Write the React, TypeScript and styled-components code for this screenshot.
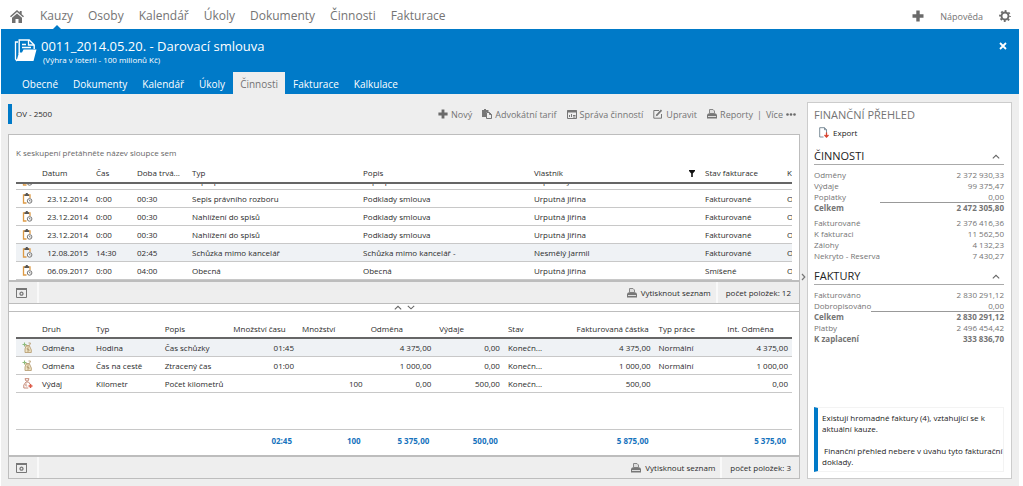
import React, { useLayoutEffect, useRef } from "react";
import styled, { createGlobalStyle, css } from "styled-components";

const blue = "#007ac8";
const grey = "#747474";
const line = "#bdbdbd";

const GlobalStyle = createGlobalStyle`
  * { box-sizing: border-box; }
  body {
    margin: 0;
    background: #fff;
    color: #2b2b2b;
    font-family: "Open Sans", "Noto Sans", sans-serif;
    font-size: 8px;
    line-height: 11px;
  }
  button { font: inherit; color: inherit; background: none; border: 0; padding: 0; cursor: pointer; }
  a { color: inherit; text-decoration: none; }
  svg { display: block; flex: none; }
  h1, h2, h3, p, dl, dd, dt { margin: 0; font-weight: 400; }
`;

const Page = styled.div`
  min-height: 100vh;
  display: flex;
  flex-direction: column;
  padding: 0 4px 0 1px;
`;

const TopBar = styled.header`
  display: flex;
  align-items: center;
  height: 29px;
  padding: 3px 8px 0 9px;
  color: ${grey};
`;

const MainNav = styled.nav`
  display: flex;
  gap: 15px;
  margin-left: 16px;
  font-size: 12px;
  line-height: 26px;
`;

const NavLink = styled.a<{ $active?: boolean }>`
  position: relative;
  ${(p) =>
    p.$active &&
    css`
      &::after {
        content: "";
        position: absolute;
        left: 50%;
        bottom: 0;
        margin-left: -4px;
        border: 4px solid transparent;
        border-top: 0;
        border-bottom-color: ${blue};
      }
    `}
`;

const TopActions = styled.div`
  display: flex;
  align-items: center;
  gap: 16px;
  margin-left: auto;
  font-size: 9px;
`;

const CaseHeader = styled.section`
  display: flex;
  flex-direction: column;
  justify-content: space-between;
  height: 65px;
  background: ${blue};
  color: #fff;
`;

const CaseTop = styled.div`
  display: flex;
  align-items: flex-start;
  gap: 4px;
  padding: 10px 12px 0 13px;
`;

const CaseTitle = styled.h1`
  font-size: 13px;
  line-height: 15px;
`;

const CaseNote = styled.p`
  padding-left: 2px;
  font-size: 8px;
  line-height: 11px;
`;

const CloseButton = styled.button`
  margin-left: auto;
  padding-top: 3px;
`;

const Tabs = styled.nav`
  display: flex;
  gap: 1px;
  padding-left: 14px;
`;

const Tab = styled.a<{ $active?: boolean }>`
  padding: 2px 7px 0;
  font-size: 10px;
  line-height: 20px;
  ${(p) => p.$active && css`background: #eee; color: ${grey};`}
`;

const Body = styled.div`
  flex: 1;
  display: flex;
  background: #eee;
  padding: 0 7px 7px;
`;

const Work = styled.main`
  flex: 1;
  min-width: 0;
  display: flex;
  flex-direction: column;
`;

const Toolbar = styled.div`
  display: flex;
  align-items: center;
  height: 40px;
  padding-right: 4px;
`;

const CaseTag = styled.div`
  border-left: 4px solid ${blue};
  padding-left: 4px;
  line-height: 20px;
`;

const ToolActions = styled.div`
  display: flex;
  align-items: center;
  gap: 10px;
  margin-left: auto;
  color: ${grey};
  font-size: 9px;
`;

const ToolButton = styled.button`
  display: flex;
  align-items: center;
  gap: 3px;
`;

const MoreGroup = styled.div`
  display: flex;
  gap: 4px;
`;

const Panel = styled.section<{ $grow?: boolean }>`
  display: flex;
  flex-direction: column;
  background: #fff;
  border: 1px solid ${line};
  ${(p) => p.$grow && css`flex: 1;`}
`;

const GroupHint = styled.p`
  padding: 12px 7px 0;
  line-height: 11px;
  color: #666;
`;

const GridArea = styled.div`
  flex: 1;
  display: flex;
  min-height: 135px;
  padding: 8px 7px 5px;
`;

const DataTable = styled.table`
  width: 100%;
  height: 100%;
  table-layout: fixed;
  border-collapse: separate;
  border-spacing: 0;
`;

const Col = styled.col<{ $w?: number }>`
  ${(p) => p.$w && css`width: ${p.$w}px;`}
`;

const Th = styled.th`
  height: 19px;
  padding: 0 0 1px 4px;
  border-bottom: 2px solid #666;
  font-weight: 400;
  text-align: left;
  white-space: nowrap;
  overflow: hidden;
`;

const HeadLabel = styled.span`
  display: flex;
  align-items: center;
  justify-content: space-between;
  padding-right: 6px;
`;

const Row = styled.tr<{ $selected?: boolean }>`
  height: 18px;
  ${(p) => p.$selected && css`background: #eff2f5;`}
`;

const Td = styled.td<{ $right?: boolean }>`
  padding: 0 4px;
  border-bottom: 1px solid #c8c8c8;
  white-space: nowrap;
  overflow: hidden;
  text-align: ${(p) => (p.$right ? "right" : "left")};
`;

const EdgeTd = styled(Td)`
  padding-right: 0;
`;

const IconTd = styled(Td)`
  padding: 0 0 0 6px;
`;

const ListTable = styled.table`
  display: block;
  margin: 7px 7px 0;

  thead { display: block; }
  tr {
    display: grid;
    grid-template-columns: 22px 54px 41px 55px 1fr 1fr 1fr 82px 9px;
  }
  th { line-height: 16px; }
  td { line-height: 17px; }
  ${IconTd} { padding-top: 3px; }
`;

const ScrollBody = styled.tbody`
  display: block;
  height: 96px;
  overflow: hidden;
`;

const Filler = styled.td`
  border-bottom: 1px solid #c8c8c8;
`;

const SumTd = styled.td`
  height: 20px;
  padding: 0 6px 0 0;
  color: #1673bd;
  font-weight: 700;
  text-align: right;
`;

const PanelFooter = styled.footer`
  display: flex;
  align-items: stretch;
  height: 23px;
  background: #eee;
  border-top: 2px solid ${line};
`;

const FootCell = styled.div`
  display: flex;
  align-items: center;
  padding: 0 8px;
  border-left: 2px solid #f9f9f9;
`;

const ToolCell = styled.div`
  display: flex;
  align-items: center;
  margin-right: auto;
  padding: 0 10px 0 7px;
  border-right: 2px solid #f9f9f9;
`;

const PrintButton = styled.button`
  display: flex;
  align-items: center;
  gap: 4px;
  padding-right: 5px;
`;

const Splitter = styled.div`
  display: flex;
  align-items: center;
  justify-content: center;
  gap: 5px;
  height: 7px;
  background: #fff;
  border: 1px solid ${line};
  border-width: 0 1px;
`;

const Gutter = styled.div`
  display: flex;
  align-items: center;
  justify-content: center;
  width: 7px;
  padding-bottom: 19px;
  color: #777;
`;

const Side = styled.aside`
  display: flex;
  flex-direction: column;
  width: 205px;
  margin-top: 8px;
  padding: 5px 7px 6px 6px;
  background: #fff;
  border: 1px solid #ccc;
  color: ${grey};
`;

const SideTitle = styled.h2`
  font-size: 11px;
  line-height: 14px;
`;

const ExportButton = styled.button`
  display: flex;
  align-items: center;
  gap: 4px;
  align-self: flex-start;
  margin: 5px 0 3px 5px;
  color: #222;
`;

const SectionHead = styled.h3`
  display: flex;
  align-items: center;
  justify-content: space-between;
  margin-top: 7px;
  padding-right: 4px;
  border-bottom: 1px solid #aaa;
  color: #222;
  font-size: 11px;
  line-height: 16px;
`;

const Figures = styled.dl`
  display: grid;
  grid-template-columns: auto 1fr;
  margin-top: 4px;
`;

const Name = styled.dt<{ $strong?: boolean }>`
  font-weight: ${(p) => (p.$strong ? 700 : 400)};
`;

const Amount = styled.dd<{ $strong?: boolean; $rule?: boolean }>`
  text-align: right;
  font-weight: ${(p) => (p.$strong ? 700 : 400)};
  ${(p) => p.$rule && css`box-shadow: 0 1px 0 #999;`}
`;

const Break = styled.div`
  grid-column: 1 / -1;
  height: 4px;
`;

const Notice = styled.div`
  margin-top: auto;
  padding: 4px 0 4px 4px;
  border: 1px solid #f3f3f3;
  border-left: 4px solid ${blue};
  color: #222;
`;

const NoticeText = styled.p`
  margin-right: -4px;
  & + & { margin-top: 11px; }
`;

const HomeIcon = () => (
  <svg width="14" height="13" viewBox="0 0 14 13" fill="#707070">
    <path d="M7 0 0 6.200l1 1.100L7 2l6 5.300 1-1.100-2.300-2V1H9.700v1.400z" />
    <path d="M2 7.800 7 3.400l5 4.400V13H8.500V9h-3v4H2z" />
  </svg>
);

const PlusIcon = ({ size }: { size: number }) => (
  <svg width={size} height={size} viewBox="0 0 12 12" fill="#6a6a6a">
    <path d="M4.300 0.500h3.400v3.800h3.800v3.400H7.700v3.800H4.300V7.700H.5V4.300h3.800z" />
  </svg>
);

const GearIcon = () => (
  <svg width="12" height="12" viewBox="0 0 12 12" fill="none" stroke="#6a6a6a">
    <circle cx="6" cy="6" r="3.500" strokeWidth="1.900" />
    <circle cx="6" cy="6" r="5" strokeWidth="1.800" strokeDasharray="1.900 2.027" strokeDashoffset="0.900" />
  </svg>
);

const FolderIcon = () => (
  <svg width="23" height="23" viewBox="0 0 23 23" fill="none" stroke="#fff">
    <path d="M4 3H1.500v17l1.500 2" strokeWidth="1.300" />
    <path d="M5.200 15V1h10l5 5v4" strokeWidth="1.400" />
    <path d="M14.500 1v5H20M8 5.500h4M8 8.500h9" strokeWidth="1.300" />
    <path d="M9.500 10.500h13L19.500 22H2.500L5 13.500h3z" fill="#fff" stroke="none" />
  </svg>
);

const CloseIcon = () => (
  <svg width="8" height="8" viewBox="0 0 8 8" stroke="#fff" strokeWidth="1.800">
    <path d="m1 1 6 6M7 1 1 7" />
  </svg>
);

const PasteIcon = () => (
  <svg width="10" height="10" viewBox="0 0 10 10" fill="none" stroke="#777">
    <path d="M0 1h2V0h2v1h2.500v2H4v5H0z" fill="#777" stroke="none" />
    <path d="M4.500 3.500h3l2 2v4h-5zM7.500 3.500v2h2" fill="#eee" />
  </svg>
);

const ChartIcon = () => (
  <svg width="10" height="9" viewBox="0 0 10 9" fill="none" stroke="#777">
    <path d="M.5 .5h9v8h-9z" />
    <path d="M0 1.500h10" strokeWidth="2" />
    <path d="M2.500 7V5M4.500 7V4M6 5.500h2.500M6 7h2.500" />
  </svg>
);

const EditIcon = () => (
  <svg width="10" height="10" viewBox="0 0 10 10" fill="none" stroke="#777">
    <path d="M6 1.500H.8v7.700h7.700V5" />
    <path d="M3.500 6.500 8.500 1.200" strokeWidth="1.800" />
    <path d="m2.500 7.500 1-2 1 1z" fill="#777" stroke="none" />
  </svg>
);

const PrinterIcon = () => (
  <svg width="10" height="10" viewBox="0 0 10 10">
    <path d="M2.500 4.500v-4H6L7.500 2v2.500z" fill="#ddd" stroke="#888" />
    <path d="M1 4.500h8l1 1.500v3.500H0V6z" fill="#777" />
    <path d="M1 7.500h8" stroke="#ddd" />
  </svg>
);

const DotsIcon = () => (
  <svg width="10" height="3" viewBox="0 0 10 3" fill="#6a6a6a">
    <circle cx="1.500" cy="1.500" r="1.300" />
    <circle cx="5" cy="1.500" r="1.300" />
    <circle cx="8.500" cy="1.500" r="1.300" />
  </svg>
);

const ClipboardIcon = () => (
  <svg width="11" height="11" viewBox="0 0 11 11" fill="none">
    <path d="M4.500 10H1.500V2H8v3" stroke="#dd9a45" strokeWidth="1.300" />
    <path d="M2.500 3V1.200h1.300V0h2v1.200H7V3z" fill="#555" />
    <circle cx="7.600" cy="7.900" r="2.300" fill="#fff" stroke="#666" strokeWidth="0.900" />
    <path d="M7.500 6.700V8h1.200" stroke="#666" strokeWidth="0.700" />
  </svg>
);

const MoneyBagIcon = () => (
  <svg width="11" height="11" viewBox="0 0 11 11" fill="none">
    <path d="M4 4h3.500l1.800 4v2.500H3V7z" fill="#efe3c4" stroke="#b9a077" strokeWidth="0.900" />
    <path d="M3.500 3.500h4L8.500 1H6.500" stroke="#b9a077" strokeWidth="0.900" />
    <path d="M.5 2.500h4M2.500 .5v4" stroke="#8dbb7c" strokeWidth="1.100" />
    <path d="M7 6H5.200v1.500H7V9H5" stroke="#a58a5e" strokeWidth="0.700" />
  </svg>
);

const ExpenseIcon = () => (
  <svg width="11" height="11" viewBox="0 0 11 11" fill="none">
    <path d="M3 .7h4L6 3H4zM4 4h2.500l1.500 2M4 4 1.800 7v3h4.500" stroke="#c58a78" strokeWidth="1" />
    <path d="M4.800 6H3.800v2h1.500" stroke="#c58a78" strokeWidth="0.800" />
    <path d="M6.500 8h4M8.500 6v4" stroke="#dc5a48" strokeWidth="1.500" />
  </svg>
);

const WindowGearIcon = () => (
  <svg width="11" height="10" viewBox="0 0 11 10" fill="none" stroke="#777">
    <path d="M.5 .5h10v9H.5z" />
    <path d="M0 1h11" strokeWidth="2" />
    <circle cx="5.500" cy="5.700" r="1.500" strokeWidth="1.300" />
  </svg>
);

const FilterIcon = () => (
  <svg width="6" height="7" viewBox="0 0 6 7" fill="#111">
    <path d="M0 0h6v1L3.800 3.500V7H2.200V3.500L0 1z" />
  </svg>
);

const ExportIcon = () => (
  <svg width="10" height="11" viewBox="0 0 10 11" fill="none">
    <path d="M4.500 10H.7V.7h4.800l2 2V6M5.500 .7v2h2" stroke="#6f8290" strokeWidth="0.900" />
    <path d="M7.500 5.500V10M5.500 8l2 2 2-2" stroke="#d9432f" strokeWidth="1.300" />
  </svg>
);

const chevrons = {
  up: "m.8 4.300 3.200-3 3.200 3",
  down: "m.8 .8 3.200 3 3.200-3",
};

const Chevron = ({ dir }: { dir: "up" | "down" }) => (
  <svg width="8" height="5" viewBox="0 0 8 5" fill="none" stroke="#666" strokeWidth="1.100">
    <path d={chevrons[dir]} />
  </svg>
);

const ChevronRight = () => (
  <svg width="5" height="8" viewBox="0 0 5 8" fill="none" stroke="#777" strokeWidth="1.200">
    <path d="m1 1 2.800 3L1 7" />
  </svg>
);

const navItems = ["Kauzy", "Osoby", "Kalendář", "Úkoly", "Dokumenty", "Činnosti", "Fakturace"];
const tabItems = ["Obecné", "Dokumenty", "Kalendář", "Úkoly", "Činnosti", "Fakturace", "Kalkulace"];

const activities = [
  ["16.12.2014", "0:00", "01:30", "Sepis právního rozboru", "Sepis právního rozboru", "Urputná Jiřina", "Fakturované"],
  ["23.12.2014", "0:00", "00:30", "Sepis právního rozboru", "Podklady smlouva", "Urputná Jiřina", "Fakturované"],
  ["23.12.2014", "0:00", "00:30", "Nahlížení do spisů", "Podklady smlouva", "Urputná Jiřina", "Fakturované"],
  ["23.12.2014", "0:00", "00:30", "Nahlížení do spisů", "Podklady smlouva", "Urputná Jiřina", "Fakturované"],
  ["12.08.2015", "14:30", "02:45", "Schůzka mimo kancelář", "Schůzka mimo kancelář -", "Nesmělý Jarmil", "Fakturované"],
  ["06.09.2017", "0:00", "04:00", "Obecná", "Obecná", "Urputná Jiřina", "Smíšené"],
];

const itemHeads = [
  "Druh", "Typ", "Popis", "Množství času", "Množství", "Odměna",
  "Výdaje", "Stav", "Fakturovaná částka", "Typ práce", "Int. Odměna",
];
const numericItem = [3, 4, 5, 6, 8, 10];

const items = [
  ["Odměna", "Hodina", "Čas schůzky", "01:45", "", "4 375,00", "0,00", "Konečn...", "4 375,00", "Normální", "4 375,00"],
  ["Odměna", "Čas na cestě", "Ztracený čas", "01:00", "", "1 000,00", "0,00", "Konečn...", "1 000,00", "Normální", "1 000,00"],
  ["Výdaj", "Kilometr", "Počet kilometrů", "", "100", "0,00", "500,00", "Konečn...", "500,00", "", "0,00"],
];
const totals = ["", "", "", "02:45", "100", "5 375,00", "500,00", "", "5 875,00", "", "5 375,00"];

function ActivityTable() {
  const scroller = useRef<HTMLTableSectionElement>(null);

  // The list opens on its newest entries.
  useLayoutEffect(() => {
    const el = scroller.current;
    if (el) el.scrollTop = el.scrollHeight;
  }, []);

  return (
    <ListTable>
      <thead>
        <tr>
          <Th />
          <Th>Datum</Th>
          <Th>Čas</Th>
          <Th>Doba trvá...</Th>
          <Th>Typ</Th>
          <Th>Popis</Th>
          <Th><HeadLabel>Vlastník<FilterIcon /></HeadLabel></Th>
          <Th>Stav fakturace</Th>
          <Th>K</Th>
        </tr>
      </thead>
      <ScrollBody ref={scroller}>
        {activities.map((row, i) => (
          <Row key={i} $selected={i === 4}>
            <IconTd><ClipboardIcon /></IconTd>
            {row.map((cell, j) => <Td key={j} $right={j === 0}>{cell}</Td>)}
            <EdgeTd>O</EdgeTd>
          </Row>
        ))}
      </ScrollBody>
    </ListTable>
  );
}

function ItemTable() {
  return (
    <GridArea>
      <DataTable>
        <colgroup>
          <Col $w={22} /><Col $w={54} />
          <Col /><Col /><Col /><Col /><Col /><Col /><Col />
          <Col $w={82} /><Col /><Col />
        </colgroup>
        <thead>
          <tr>
            <Th />
            {itemHeads.map((h) => <Th key={h}>{h}</Th>)}
          </tr>
        </thead>
        <tbody>
          {items.map((row, i) => (
            <Row key={i} $selected={i === 0}>
              <IconTd>{i < 2 ? <MoneyBagIcon /> : <ExpenseIcon />}</IconTd>
              {row.map((cell, j) => <Td key={j} $right={numericItem.includes(j)}>{cell}</Td>)}
            </Row>
          ))}
          <tr><Filler colSpan={12} /></tr>
        </tbody>
        <tfoot>
          <tr>
            <SumTd />
            {totals.map((t, i) => <SumTd key={i}>{t}</SumTd>)}
          </tr>
        </tfoot>
      </DataTable>
    </GridArea>
  );
}

function ListFooter({ count }: { count: number }) {
  return (
    <PanelFooter>
      <ToolCell><button aria-label="Nastavení"><WindowGearIcon /></button></ToolCell>
      <PrintButton><PrinterIcon />Vytisknout seznam</PrintButton>
      <FootCell>počet položek: {count}</FootCell>
    </PanelFooter>
  );
}

type Figure = { name: string; amount: string; strong?: boolean; rule?: boolean; gap?: boolean };

const activityFigures: Figure[] = [
  { name: "Odměny", amount: "2 372 930,33" },
  { name: "Výdaje", amount: "99 375,47" },
  { name: "Poplatky", amount: "0,00", rule: true },
  { name: "Celkem", amount: "2 472 305,80", strong: true, gap: true },
  { name: "Fakturované", amount: "2 376 416,36" },
  { name: "K fakturaci", amount: "11 562,50" },
  { name: "Zálohy", amount: "4 132,23" },
  { name: "Nekryto - Reserva", amount: "7 430,27" },
];

const invoiceFigures: Figure[] = [
  { name: "Fakturováno", amount: "2 830 291,12" },
  { name: "Dobropisováno", amount: "0,00", rule: true },
  { name: "Celkem", amount: "2 830 291,12", strong: true },
  { name: "Platby", amount: "2 496 454,42" },
  { name: "K zaplacení", amount: "333 836,70", strong: true },
];

function FigureSection({ title, figures }: { title: string; figures: Figure[] }) {
  return (
    <>
      <SectionHead>
        {title}
        <button aria-label={`Sbalit ${title}`}><Chevron dir="up" /></button>
      </SectionHead>
      <Figures>
        {figures.map((f) => (
          <React.Fragment key={f.name}>
            <Name $strong={f.strong}>{f.name}</Name>
            <Amount $strong={f.strong} $rule={f.rule}>{f.amount}</Amount>
            {f.gap && <Break />}
          </React.Fragment>
        ))}
      </Figures>
    </>
  );
}

export default function App() {
  return (
    <Page>
      <GlobalStyle />
      <TopBar>
        <a href="#domu" aria-label="Domů"><HomeIcon /></a>
        <MainNav>
          {navItems.map((n, i) => <NavLink key={n} href="#" $active={i === 0}>{n}</NavLink>)}
        </MainNav>
        <TopActions>
          <button aria-label="Přidat"><PlusIcon size={12} /></button>
          <a href="#napoveda">Nápověda</a>
          <button aria-label="Nastavení"><GearIcon /></button>
        </TopActions>
      </TopBar>
      <CaseHeader>
        <CaseTop>
          <FolderIcon />
          <div>
            <CaseTitle>0011_2014.05.20. - Darovací smlouva</CaseTitle>
            <CaseNote>(Výhra v loterii - 100 milionů Kč)</CaseNote>
          </div>
          <CloseButton aria-label="Zavřít"><CloseIcon /></CloseButton>
        </CaseTop>
        <Tabs>
          {tabItems.map((t) => <Tab key={t} href="#" $active={t === "Činnosti"}>{t}</Tab>)}
        </Tabs>
      </CaseHeader>
      <Body>
        <Work>
          <Toolbar>
            <CaseTag>OV - 2500</CaseTag>
            <ToolActions>
              <ToolButton><PlusIcon size={10} />Nový</ToolButton>
              <ToolButton><PasteIcon />Advokátní tarif</ToolButton>
              <ToolButton><ChartIcon />Správa činností</ToolButton>
              <ToolButton><EditIcon />Upravit</ToolButton>
              <MoreGroup>
                <ToolButton><PrinterIcon />Reporty</ToolButton>
                <span>|</span>
                <ToolButton>Více<DotsIcon /></ToolButton>
              </MoreGroup>
            </ToolActions>
          </Toolbar>
          <Panel>
            <GroupHint>K seskupení přetáhněte název sloupce sem</GroupHint>
            <ActivityTable />
            <ListFooter count={12} />
          </Panel>
          <Splitter>
            <button aria-label="Zvětšit dolní panel"><Chevron dir="up" /></button>
            <button aria-label="Zvětšit horní panel"><Chevron dir="down" /></button>
          </Splitter>
          <Panel $grow>
            <ItemTable />
            <ListFooter count={3} />
          </Panel>
        </Work>
        <Gutter>
          <button aria-label="Skrýt přehled"><ChevronRight /></button>
        </Gutter>
        <Side>
          <SideTitle>FINANČNÍ PŘEHLED</SideTitle>
          <ExportButton><ExportIcon />Export</ExportButton>
          <FigureSection title="ČINNOSTI" figures={activityFigures} />
          <FigureSection title="FAKTURY" figures={invoiceFigures} />
          <Notice>
            <NoticeText>Existují hromadné faktury (4), vztahující se k aktuální kauze.</NoticeText>
            <NoticeText>&nbsp;Finanční přehled nebere v úvahu tyto fakturační doklady.</NoticeText>
          </Notice>
        </Side>
      </Body>
    </Page>
  );
}
